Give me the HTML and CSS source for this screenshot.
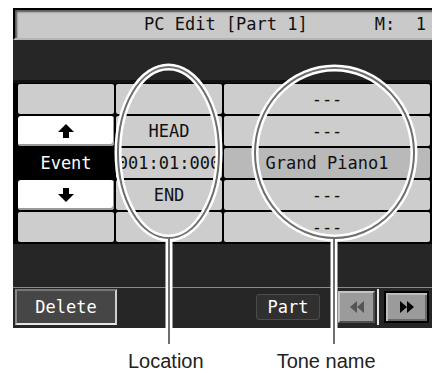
FILE: index.html
```html
<!DOCTYPE html>
<html lang="en">
<head>
    <meta charset="UTF-8">
    <meta name="viewport" content="width=device-width, initial-scale=1.0">
    <title>PC Edit</title>
    <link rel="stylesheet" href="styles.css">
</head>
<body>

    <div class="screen">
        <div class="titlebar">
            <span class="title">PC Edit [Part 1]</span>
            <span class="measure">M:  1</span>
        </div>
        <div class="band"></div>

        <!-- event list -->
        <div class="grid">
            <div class="cell"></div>
            <div class="cell"></div>
            <div class="cell">---</div>

            <div class="cell btn">
                <svg width="16" height="14" viewBox="0 0 16 14"><path d="M8 0 L16 8 H11 V14 H5 V8 H0 Z" fill="#000"/></svg>
            </div>
            <div class="cell">HEAD</div>
            <div class="cell">---</div>

            <div class="cell event">Event</div>
            <div class="cell">001:01:000</div>
            <div class="cell current">Grand Piano1</div>

            <div class="cell btn">
                <svg width="16" height="14" viewBox="0 0 16 14"><path d="M8 14 L16 6 H11 V0 H5 V6 H0 Z" fill="#000"/></svg>
            </div>
            <div class="cell">END</div>
            <div class="cell">---</div>

            <div class="cell"></div>
            <div class="cell"></div>
            <div class="cell">---</div>
        </div>

        <div class="band low"></div>

        <div class="bottombar">
            <div class="delete">Delete</div>
            <div class="part">Part</div>
            <div class="jump rew">
                <svg width="14" height="12" viewBox="0 0 14 12"><path d="M7 0 V12 L0 6 Z M14 0 V12 L7 6 Z" fill="#555"/></svg>
            </div>
            <div class="sep"></div>
            <div class="jump ff">
                <svg width="14" height="12" viewBox="0 0 14 12"><path d="M0 0 V12 L7 6 Z M7 0 V12 L14 6 Z" fill="#000"/></svg>
            </div>
        </div>
    </div>

    <div class="labels">
        <span class="label">Location</span>
        <span class="label">Tone name</span>
    </div>

    <!-- callouts drawn over the screen -->
    <svg class="callouts" width="432" height="373" viewBox="0 0 432 373">
        <g fill="none" stroke="#fff" stroke-width="7">
            <ellipse cx="168.5" cy="152.5" rx="50.5" ry="85.5"/>
            <ellipse cx="334.5" cy="153" rx="79.5" ry="85"/>
            <line x1="169" y1="238" x2="169" y2="344"/>
            <line x1="334" y1="238" x2="334" y2="344"/>
        </g>
        <g fill="none" stroke="#6e6e6e" stroke-width="2">
            <ellipse cx="168.5" cy="152.5" rx="50.5" ry="85.5"/>
            <ellipse cx="334.5" cy="153" rx="79.5" ry="85"/>
            <line x1="169" y1="238" x2="169" y2="344"/>
            <line x1="334" y1="238" x2="334" y2="344"/>
        </g>
    </svg>

</body>
</html>
```

FILE: styles.css
```css
body { margin: 0; background: #fff; position: relative; width: 432px; height: 373px; overflow: hidden; }
.screen { margin: 8px 0 0 13px; width: 419px; height: 320px; background: #262626; font-family: "DejaVu Sans Mono", monospace; font-size: 17px; overflow: hidden; }
.titlebar { height: 28px; display: flex; align-items: center; background: #c9c9c9; border-top: 2px solid #000; border-left: 2px solid #000; border-bottom: 2px solid #b4b4b4; box-shadow: inset 2px 2px 2px #555; color: #111; padding: 0 6px 0 129px; white-space: pre; }
.measure { margin-left: auto; }
.band { height: 40px; background: #262626; border-bottom: 3px solid #111; }
.band.low { height: 43px; border-bottom: 1px solid #8a8a8a; }
.grid { display: grid; grid-template-columns: 96px 106px 1fr; grid-auto-rows: 30px; gap: 2px; padding: 1px 2px 2px 5px; background: #000; }
.cell { background: #cdcdcd; border-radius: 2px; display: flex; align-items: center; justify-content: center; color: #111; white-space: nowrap; }
.cell.btn { background: #fff; border-radius: 3px; box-shadow: inset -1px -2px 0 #9a9a9a; }
.cell.event { background: #000; color: #fff; }
.cell.current { background: #b9b9b9; }
.bottombar { height: 38px; display: flex; align-items: center; background: #262626; }
.delete { margin-left: 2px; width: 98px; height: 32px; display: flex; align-items: center; justify-content: center; background: #464646; color: #fff; border: 2px solid; border-color: #777 #cfcfcf #e6e6e6 #888; }
.part { margin-left: 139px; width: 62px; height: 24px; display: flex; align-items: center; justify-content: center; background: #303030; color: #fff; border: 1px solid #4c4c4c; border-radius: 3px; }
.jump { height: 28px; display: flex; align-items: center; justify-content: center; background: #9b9b9b; }
.jump.rew { margin-left: 18px; width: 33px; border: 2px solid; border-color: #c4c4c4 #505050 #505050 #c4c4c4; }
.sep { width: 2px; height: 36px; margin-left: 2px; background: #e8e8e8; }
.jump.ff { margin-left: 5px; width: 41px; border: 2px solid #000; box-shadow: inset 2px 2px 0 #bdbdbd, inset -2px -2px 0 #6a6a6a; }
.labels { display: flex; gap: 73px; padding: 22px 0 0 128px; font-family: "Liberation Sans", Arial, sans-serif; font-size: 20px; color: #222; }
.callouts { position: absolute; left: 0; top: 0; pointer-events: none; }
```
